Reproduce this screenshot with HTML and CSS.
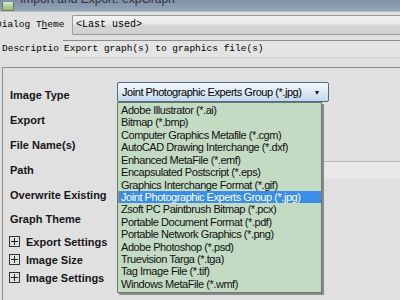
FILE: index.html
```html
<!DOCTYPE html>
<html lang="en">
<head>
  <meta charset="UTF-8">
  <title>Import and Export: expGraph</title>
  <link rel="stylesheet" href="styles.css">
</head>
<body>
  <div class="titlebar">
    <span class="app-icon"></span>
    <span class="title">Import and Export: expGraph</span>
  </div>

  <div class="top-row">
    <span class="mono-label theme-label">Dialog T<u>h</u>eme</span>
    <div class="theme-combo">&lt;Last used&gt;</div>
  </div>

  <div class="top-row desc-row">
    <span class="mono-label desc-label">Descriptio</span>
    <div class="desc-box">Export graph(s) to graphics file(s)</div>
  </div>

  <div class="panel">
    <div class="path-strip"></div>
    <div class="field">
      <span class="label">Image Type</span>
      <div class="select">
        <span>Joint Photographic Experts Group (*.jpg)</span>
        <span class="arrow">&#9660;</span>
      </div>
    </div>
    <div class="field"><span class="label">Export</span></div>
    <div class="field"><span class="label">File Name(s)</span></div>
    <div class="field"><span class="label">Path</span></div>
    <div class="field"><span class="label">Overwrite Existing</span></div>
    <div class="field"><span class="label">Graph Theme</span></div>
    <div class="group first"><span class="plus"></span><span class="label">Export Settings</span></div>
    <div class="group"><span class="plus"></span><span class="label">Image Size</span></div>
    <div class="group"><span class="plus"></span><span class="label">Image Settings</span></div>

    <ul class="dropdown">
      <li>Adobe Illustrator (*.ai)</li>
      <li>Bitmap (*.bmp)</li>
      <li>Computer Graphics Metafile (*.cgm)</li>
      <li>AutoCAD Drawing Interchange (*.dxf)</li>
      <li>Enhanced MetaFile (*.emf)</li>
      <li>Encapsulated Postscript (*.eps)</li>
      <li>Graphics Interchange Format (*.gif)</li>
      <li class="selected">Joint Photographic Experts Group (*.jpg)</li>
      <li>Zsoft PC Paintbrush Bitmap (*.pcx)</li>
      <li>Portable Document Format (*.pdf)</li>
      <li>Portable Network Graphics (*.png)</li>
      <li>Adobe Photoshop (*.psd)</li>
      <li>Truevision Targa (*.tga)</li>
      <li>Tag Image File (*.tif)</li>
      <li>Windows MetaFile (*.wmf)</li>
    </ul>
  </div>
</body>
</html>
```

FILE: styles.css
```css
html, body {
  margin: 0;
  height: 100%;
  overflow: hidden;
}

body {
  background-color: #e0e0e0;
  font-family: "Liberation Sans", Arial, sans-serif;
  color: #111;
}

.titlebar {
  height: 11px;
  background: linear-gradient(#7f90a6, #95a5b8);
  border-bottom: 1px solid #b4bcc6;
  display: flex;
  align-items: flex-end;
  overflow: hidden;
}

.app-icon {
  width: 10px;
  height: 8px;
  margin-left: 2px;
  background: linear-gradient(#d8e4c8, #98b878);
  border: 1px solid #6c7c5c;
  border-top: none;
}

.title {
  margin-left: 6px;
  font-size: 12px;
  line-height: 12px;
  margin-bottom: 6px;
  color: #2c3642;
}

.top-row {
  display: flex;
  align-items: center;
  margin-top: 2px;
  height: 21px;
}

.desc-row {
  margin-top: 3px;
}

.mono-label {
  font-family: "Liberation Mono", "Courier New", monospace;
  font-size: 9.5px;
  color: #000;
  white-space: nowrap;
  overflow: hidden;
}

.theme-label {
  width: 70px;
  margin-left: -4px;
}

.desc-label {
  width: 60px;
  margin-left: 2px;
}

.theme-combo {
  flex: 1;
  height: 18px;
  margin-left: 6px;
  border: 1px solid #9a9a9a;
  border-right: none;
  border-radius: 2px 0 0 2px;
  background: linear-gradient(#f2f2f2 0%, #e8e8e8 45%, #d6d6d6 50%, #d0d0d0 100%);
  font-family: "Liberation Mono", "Courier New", monospace;
  font-size: 10px;
  line-height: 18px;
  padding-left: 3px;
  color: #000;
}

.desc-box {
  flex: 1;
  height: 16px;
  margin-left: 1px;
  border-top: 1px solid #8c8c8c;
  border-bottom: 1px solid #d0d0d0;
  background-color: #e4e4e4;
  font-family: "Liberation Mono", "Courier New", monospace;
  font-size: 9.5px;
  line-height: 16px;
  padding-left: 1px;
  color: #000;
}

.panel {
  position: relative;
  margin: 8px 0 0 2px;
  border-top: 1px solid #8e8e8e;
  border-left: 1px solid #8e8e8e;
  height: 240px;
  padding-top: 15px;
}

.path-strip {
  position: absolute;
  left: 320px;
  right: 0;
  top: 93px;
  height: 17px;
  border-top: 1px solid #b4b4b4;
  background-color: #e9e9e9;
}

.field {
  display: flex;
  align-items: center;
  height: 24.8px;
  padding-left: 7px;
}

.label {
  font-weight: bold;
  font-size: 11px;
  color: #161616;
  white-space: nowrap;
}

.field .label {
  width: 107px;
}

.select {
  align-self: flex-start;
  margin-top: -1px;
  display: flex;
  justify-content: space-between;
  align-items: center;
  width: 198px;
  height: 18px;
  padding: 0 8px 0 4px;
  border: 1px solid #4c6c8c;
  border-radius: 2px;
  background: linear-gradient(#f4f8fc 0%, #dce8f4 50%, #c4d8ec 100%);
  font-size: 11px;
  letter-spacing: -0.45px;
  color: #000;
}

.arrow {
  font-size: 7px;
  color: #1a1a1a;
}

.group {
  display: flex;
  align-items: center;
  height: 18px;
  padding-left: 6px;
}

.group.first {
  margin-top: 1px;
}

.plus {
  position: relative;
  width: 9px;
  height: 9px;
  border: 1px solid #333;
  margin-right: 6px;
}

.plus::before,
.plus::after {
  content: "";
  position: absolute;
  background-color: #222;
}

.plus::before {
  left: 1px;
  right: 1px;
  top: 4px;
  height: 1px;
}

.plus::after {
  top: 1px;
  bottom: 1px;
  left: 4px;
  width: 1px;
}

.dropdown {
  position: absolute;
  left: 114px;
  top: 34px;
  width: 203px;
  margin: 0;
  padding: 1px 0 2px;
  list-style: none;
  background-color: #c3dac3;
  border: 1px solid #6c7c6c;
  box-shadow: 2px 2px 0 #8a8a8a;
  font-size: 11px;
  letter-spacing: -0.45px;
}

.dropdown li {
  height: 12.43px;
  line-height: 12.43px;
  padding-left: 3px;
  white-space: nowrap;
}

.dropdown li.selected {
  background-color: #3a8ee6;
  color: #fff;
  box-shadow: inset 1px 0 0 #d08850;
}
```
